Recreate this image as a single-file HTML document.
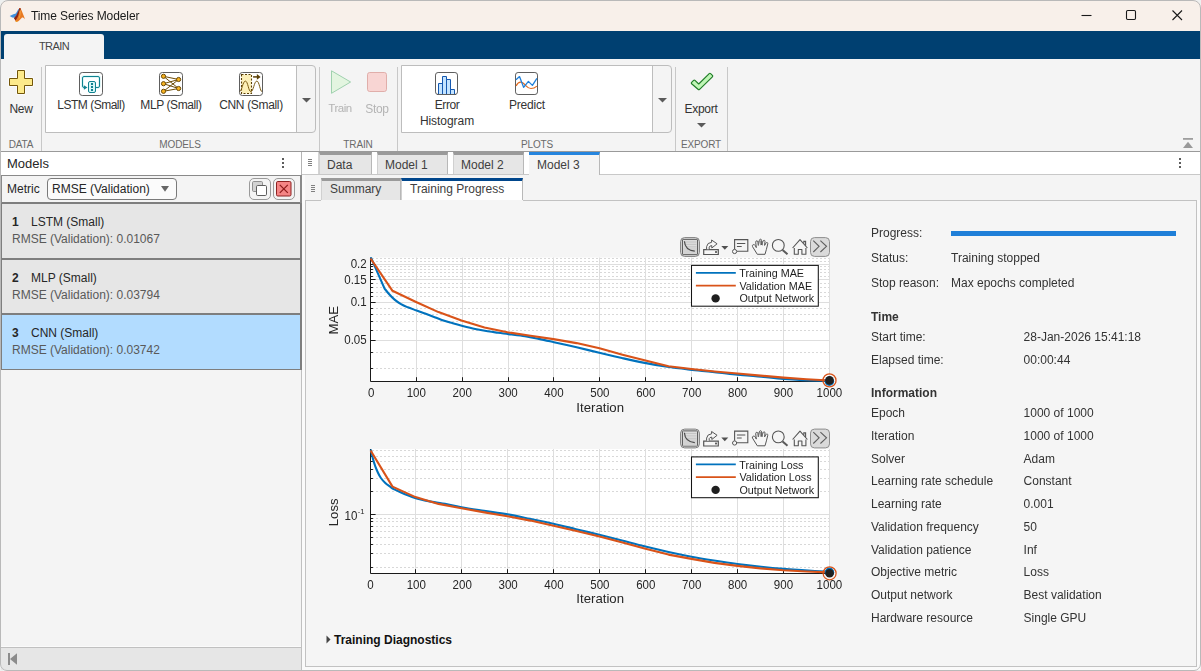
<!DOCTYPE html><html><head><meta charset="utf-8"><title>Time Series Modeler</title><style>
*{box-sizing:border-box;margin:0;padding:0}
html,body{width:1201px;height:671px;overflow:hidden;background:#eef0f0}
body{font-family:"Liberation Sans",sans-serif;font-size:12px;color:#262626;position:relative}
.a{position:absolute}
.t{position:absolute;white-space:nowrap;line-height:1}
.c{transform:translateX(-50%)}
.sep{position:absolute;width:1px;background:#c8c8c8;top:67px;height:84px}
.sec{position:absolute;top:140px;font-size:10px;letter-spacing:-0.15px;color:#6a6a6a;white-space:nowrap;line-height:1;transform:translateX(-50%)}
.lbl{position:absolute;font-size:12px;letter-spacing:-0.45px;color:#333;white-space:nowrap;line-height:1;transform:translateX(-50%)}
.dis{color:#b4b4b4}
.tr{font-size:11.5px}
.tab{position:absolute;top:152px;height:22px;background:#e6e6e6;border-top:3px solid #9a9a9a;border-right:1px solid #b8b8b8;border-left:1px solid #d0d0d0;font-size:12px;color:#404040;line-height:1}
.tab span{position:absolute;left:7px;top:4px;white-space:nowrap}
.g{will-change:transform}
.info{position:absolute;font-size:12px;color:#333;white-space:nowrap;line-height:1}
.b{font-weight:bold}
</style></head><body>
<div class="a" style="left:0;top:0;width:1201px;height:31px;background:#f8f0ea;border-radius:8px 8px 0 0"></div>
<div class="a" style="left:0;top:31px;width:1201px;height:28px;background:#004071"></div>
<div class="a" style="left:4px;top:34px;width:100px;height:25px;background:#f4f4f4;border-radius:3px 3px 0 0"></div>
<div class="t c" style="left:54px;top:41px;font-size:11px;letter-spacing:-0.6px;color:#444">TRAIN</div>
<div class="t g" style="left:31px;top:10px;font-size:12px;letter-spacing:-0.1px;color:#1a1a1a">Time Series Modeler</div>
<svg class="a" style="left:9px;top:7px" width="18" height="16" viewBox="9 7 18 16"><path d="M9.7 16L13.4 14.3 15.8 13.4 18.2 9.6 19.4 8.4 17.6 14.6 14.6 17.8 12.2 17.4Z" fill="#3f8fdc"/><path d="M13.9 18.2L16.4 15.2 18.2 11.2 19.5 8 20.5 8.2 19.8 14.5 17.8 19.6 16.2 21.4Z" fill="#8a2414"/><path d="M19.9 8C21 8.6 22.6 12.6 24.3 17.2L24.9 19.3C23.6 17.8 22.6 17.2 21.6 17.9 20.4 18.8 18.8 21.6 16.3 22 15.4 21.6 15.2 20.8 15.6 20.2 18 18 19.2 13 19.9 8Z" fill="#e87a22"/><path d="M19.9 8.4C20.6 11 20.4 15 19 18.4" stroke="#f4a040" stroke-width="0.9" fill="none"/><path d="M15.8 20.6L17.4 21.6 16.3 22z" fill="#f0b21c"/><path d="M19.3 8.6L19.9 7.9 20.7 8.7 20.4 10.2 19.2 10.4z" fill="#8a1a10"/></svg>
<svg class="a" style="left:1075px;top:5px" width="120" height="22" viewBox="0 0 120 22" fill="none" stroke="#1a1a1a" stroke-width="1.1"><path d="M6.5 10.5h10"/><rect x="51.5" y="5.5" width="9" height="9" rx="1.2"/><path d="M97.5 5.5l9.5 9.5M107 5.5l-9.5 9.5"/></svg>
<div class="a" style="left:0;top:59px;width:1201px;height:92px;background:#f4f4f4"></div>
<div class="sep" style="left:41px"></div>
<div class="sep" style="left:319px"></div>
<div class="sep" style="left:397px"></div>
<div class="sep" style="left:675px"></div>
<div class="sep" style="left:727px"></div>
<div class="a" style="left:45px;top:65px;width:271px;height:68px;border:1px solid #bdbdbd;border-radius:0 4px 4px 0;background:#f4f4f4"></div>
<div class="a" style="left:46px;top:66px;width:251px;height:66px;background:#fff;border-right:1px solid #bdbdbd"></div>
<svg class="a" style="left:302px;top:98px" width="9" height="5" viewBox="0 0 9 5"><path d="M0 0h9L4.5 4.5z" fill="#5a5a5a"/></svg>
<div class="a" style="left:401px;top:65px;width:271px;height:68px;border:1px solid #bdbdbd;border-radius:0 4px 4px 0;background:#f4f4f4"></div>
<div class="a" style="left:402px;top:66px;width:251px;height:66px;background:#fff;border-right:1px solid #bdbdbd"></div>
<svg class="a" style="left:658px;top:98px" width="9" height="5" viewBox="0 0 9 5"><path d="M0 0h9L4.5 4.5z" fill="#5a5a5a"/></svg>
<div class="sec" style="left:21px">DATA</div>
<div class="sec" style="left:180px">MODELS</div>
<div class="sec" style="left:358px">TRAIN</div>
<div class="sec" style="left:537px">PLOTS</div>
<div class="sec" style="left:701px">EXPORT</div>
<div class="lbl" style="left:21px;top:103px;letter-spacing:-0.3px">New</div>
<div class="lbl" style="left:91px;top:99px;letter-spacing:-0.5px">LSTM (Small)</div>
<div class="lbl" style="left:171px;top:99px;letter-spacing:-0.4px">MLP (Small)</div>
<div class="lbl" style="left:251px;top:99px;letter-spacing:-0.33px">CNN (Small)</div>
<div class="lbl dis g tr" style="left:340px;top:103px;letter-spacing:-0.45px">Train</div>
<div class="lbl dis g" style="left:377px;top:103px;letter-spacing:-0.35px">Stop</div>
<div class="lbl" style="left:447px;top:99px;letter-spacing:-0.45px">Error</div>
<div class="lbl" style="left:447px;top:115px;letter-spacing:-0.05px">Histogram</div>
<div class="lbl" style="left:527px;top:99px;letter-spacing:-0.2px">Predict</div>
<div class="lbl" style="left:701px;top:103px;letter-spacing:-0.3px">Export</div>

<svg class="a" style="left:8px;top:69px" width="26" height="26" viewBox="0 0 26 26"><path d="M9.5 1.5H16.5V9.5H24.5V16.5H16.5V24.5H9.5V16.5H1.5V9.5H9.5Z" fill="none" stroke="#fff" stroke-width="2.6" stroke-linejoin="round" opacity="0.8"/><path d="M9.5 1.5H16.5V9.5H24.5V16.5H16.5V24.5H9.5V16.5H1.5V9.5H9.5Z" fill="#fdea8a" stroke="#73560a" stroke-width="1" stroke-linejoin="round"/></svg>
<svg class="a" style="left:78px;top:71px" width="26" height="26" viewBox="0 0 26 26" fill="none"><rect x="1.5" y="1.5" width="23" height="23" rx="2.8" fill="#fff" stroke="#5e5e5e"/><path d="M18 16.5H20Q21.5 16.5 21.5 15V7Q21.5 5.5 20 5.5H6Q4.5 5.5 4.5 7V15Q4.5 16.5 6 16.5" stroke="#d8f6f6" stroke-width="2.6"/><path d="M18 16.5H20Q21.5 16.5 21.5 15V7Q21.5 5.5 20 5.5H6Q4.5 5.5 4.5 7V15Q4.5 16.5 6 16.5" stroke="#0f8290" stroke-width="1"/><rect x="10.5" y="10.5" width="7" height="11" rx="1.5" fill="#d6f7f7" stroke="#0f8290" stroke-width="1"/><g fill="#0f8290"><rect x="13" y="12" width="2" height="2"/><rect x="13" y="15" width="2" height="2"/><rect x="13" y="18" width="2" height="2"/><path d="M5.9 14.3L9.5 16.5 5.9 18.7z"/></g></svg>
<svg class="a" style="left:158px;top:71px" width="26" height="26" viewBox="0 0 26 26" fill="none"><rect x="1.5" y="1.5" width="23" height="23" rx="2.8" fill="#fff" stroke="#5e5e5e"/><g stroke="#6b4a06" stroke-width="1"><path d="M5.5 5.3L20.6 8.5M5.5 5.3L20.6 17.5M5.5 12.7L20.6 8.5M5.5 12.7L20.6 17.5M5.5 20.3L20.6 8.5M5.5 20.3L20.6 17.5"/></g><g fill="#f6b220" stroke="#6b4a06" stroke-width="1"><circle cx="5.5" cy="5.3" r="2.1"/><circle cx="5.5" cy="12.7" r="2.1"/><circle cx="5.5" cy="20.3" r="2.1"/><circle cx="20.6" cy="8.5" r="2.1"/><circle cx="20.6" cy="17.5" r="2.1"/></g></svg>
<svg class="a" style="left:238px;top:71px" width="26" height="26" viewBox="0 0 26 26" fill="none"><rect x="1.5" y="1.5" width="23" height="23" rx="2.8" fill="#fff" stroke="#5e5e5e"/><rect x="3.5" y="3.5" width="10" height="19" fill="#fdf0b8" stroke="#5a3f06" stroke-width="1.1" stroke-dasharray="2 1.5"/><path d="M1.8 20.4C3.8 20.4 4.8 10.1 7.4 10.1S10.4 20.6 12.9 20.6 16.2 10.1 18.8 10.1 22 20.6 24 20.6" stroke="#7b5a10" stroke-width="1"/><path d="M15.1 5.9h4.6" stroke="#5a3f06" stroke-width="1.5"/><path d="M18.9 3.1L22.6 5.9 18.9 8.7z" fill="#5a3f06"/></svg>
<svg class="a" style="left:330px;top:69px" width="24" height="26" viewBox="0 0 24 26"><path d="M1.5 1.8L20.6 13 1.5 24.3z" fill="#e3f5e0" stroke="#9fd1ae" stroke-width="1" stroke-linejoin="round"/></svg>
<svg class="a" style="left:366px;top:71px" width="22" height="22" viewBox="0 0 22 22"><rect x="1.5" y="1.5" width="19" height="19" rx="2.2" fill="#f8d5d3" stroke="#e0aeaa"/></svg>
<svg class="a" style="left:434px;top:71px" width="26" height="26" viewBox="0 0 26 26" fill="none"><rect x="1.5" y="1.5" width="22" height="22" rx="2.6" fill="#fff" stroke="#5e5e5e" stroke-width="1"/><g fill="#c4e4ff" stroke="#1558b0" stroke-width="1"><path d="M4.5 23V12.5h4V23"/><path d="M8.5 23V5.5h4V23"/><path d="M12.5 23V8.5h4V23"/><path d="M16.5 23V18.5h4V23"/></g><path d="M3 23.5h19" stroke="#5e5e5e" stroke-width="1"/></svg>
<svg class="a" style="left:514px;top:71px" width="26" height="26" viewBox="0 0 26 26" fill="none"><rect x="1.5" y="1.5" width="22" height="22" rx="2.6" fill="#fff" stroke="#5e5e5e" stroke-width="1"/><path d="M2.1 14.9C3.4 12.4 4.8 11.2 6.6 11.2 9.4 11.2 10.4 13.2 12 14.8 13.8 16.6 15 17.5 17 17.5 19 17.5 21.4 16.4 22.9 15.1" stroke="#e2691c" stroke-width="1.2"/><path d="M2 8.7L5.5 5.6 9.6 16.3 14.4 10.4 18.4 14.4 22.9 7.3" stroke="#2080da" stroke-width="1.3" stroke-linejoin="round"/></svg>
<svg class="a" style="left:689px;top:71px" width="26" height="20" viewBox="0 0 26 20"><path d="M2.6 11.4L4.6 9.4Q5.3 8.7 6 9.4L9.7 13 20.2 2.6Q20.9 1.9 21.6 2.6L23.4 4.4Q24.1 5.1 23.4 5.8L10.6 18.3Q9.8 19 9 18.3L2.6 12.8Q1.9 12.1 2.6 11.4z" fill="#c0f6b6" stroke="#1f7d27" stroke-width="1.15" stroke-linejoin="round"/></svg>
<svg class="a" style="left:697px;top:123px" width="9" height="5" viewBox="0 0 9 5"><path d="M0 0h9L4.5 4.5z" fill="#5a5a5a"/></svg>
<svg class="a" style="left:1183px;top:138px" width="10" height="10" viewBox="0 0 10 10"><path d="M0 0.9h10" stroke="#999" stroke-width="1.7"/><path d="M5 3.8L10 10H0z" fill="#999"/></svg>

<div class="a" style="left:0;top:151px;width:1201px;height:1px;background:#9a9a9a"></div>

<!-- left panel -->
<div class="a" style="left:0;top:152px;width:1201px;height:519px;background:#f4f4f4;border-radius:0 0 7px 7px"></div>
<div class="a" style="left:1px;top:152px;width:300px;height:23px;background:#fff"></div>
<div class="t" style="left:7px;top:157px;font-size:13px;color:#262626">Models</div>
<svg class="a" style="left:282px;top:158px" width="2" height="11" viewBox="0 0 2 11" fill="#5c5c5c"><rect x="0" y="0" width="2" height="2"/><rect x="0" y="4" width="2" height="2"/><rect x="0" y="8" width="2" height="2"/></svg>
<div class="a" style="left:1px;top:175px;width:301px;height:28px;background:#f4f4f4;border-top:1px solid #8a8a8a"></div>
<div class="t" style="left:7px;top:183px;font-size:12px;color:#262626">Metric</div>
<div class="a" style="left:47px;top:178px;width:130px;height:22px;background:#fbfbfb;border:1px solid #7a7a7a;border-radius:4px"></div>
<div class="t" style="left:52px;top:183px;font-size:12px;color:#262626">RMSE (Validation)</div>
<svg class="a" style="left:161px;top:186px" width="8" height="6" viewBox="0 0 8 6"><path d="M0 0h8L4 5.8z" fill="#666"/></svg>
<!-- copy / delete buttons -->
<div class="a" style="left:249px;top:178px;width:22px;height:22px;background:#f4f4f4;border:1px solid #9a9a9a;border-radius:5px"></div>
<svg class="a" style="left:251px;top:180px" width="18" height="18" viewBox="0 0 18 18"><rect x="1.5" y="1.5" width="10" height="10" rx="1.2" fill="#d2d2d2" stroke="#909090"/><rect x="5.5" y="5.5" width="10" height="10" rx="1.2" fill="#fff" stroke="#5e5e5e"/></svg>
<div class="a" style="left:273px;top:178px;width:22px;height:22px;background:#f4f4f4;border:1px solid #9a9a9a;border-radius:5px"></div>
<svg class="a" style="left:275px;top:180px" width="18" height="18" viewBox="0 0 18 18"><rect x="1.5" y="1.5" width="14.5" height="14.5" rx="1.3" fill="#f58585" stroke="#8d2222"/><path d="M4.8 4.8l8 8M12.8 4.8l-8 8" stroke="#8d1a1a" stroke-width="1.2"/></svg>
<!-- list -->
<div class="a" style="left:1px;top:202px;width:301px;height:168px;background:#7e7e7e"></div>
<div class="a" style="left:2px;top:204px;width:298px;height:54px;background:#e6e6e6"></div>
<div class="a" style="left:2px;top:260px;width:298px;height:53px;background:#e6e6e6"></div>
<div class="a" style="left:2px;top:315px;width:298px;height:54px;background:#b2dcff"></div>
<div class="a" style="left:1px;top:175px;width:1px;height:28px;background:#8a8a8a"></div>
<div class="a" style="left:300px;top:175px;width:2px;height:28px;background:#8a8a8a"></div>
<div class="t b" style="left:12px;top:216px">1</div><div class="t" style="left:31px;top:216px">LSTM (Small)</div><div class="t" style="left:12px;top:233px;color:#595959">RMSE (Validation): 0.01067</div>
<div class="t b" style="left:12px;top:272px">2</div><div class="t" style="left:31px;top:272px">MLP (Small)</div><div class="t" style="left:12px;top:289px;color:#595959">RMSE (Validation): 0.03794</div>
<div class="t b" style="left:12px;top:327px">3</div><div class="t" style="left:31px;top:327px">CNN (Small)</div><div class="t" style="left:12px;top:344px;color:#595959">RMSE (Validation): 0.03742</div>
<!-- left status bar -->
<div class="a" style="left:1px;top:647px;width:300px;height:23px;background:#e6e6e6;border-top:1px solid #c0c0c0"></div>
<svg class="a" style="left:8px;top:653px" width="10" height="12" viewBox="0 0 10 12"><rect x="0" y="0" width="2" height="12" fill="#8c8c8c"/><path d="M9 0.2v11.6L2 6z" fill="#8c8c8c"/></svg>
<!-- divider -->
<div class="a" style="left:301px;top:152px;width:1px;height:23px;background:#b4b4b4"></div>
<div class="a" style="left:301px;top:370px;width:1px;height:300px;background:#c0c0c0"></div>
<div class="a" style="left:302px;top:175px;width:3px;height:495px;background:#fafafa"></div>
<div class="a" style="left:1px;top:646px;width:300px;height:1px;background:#fafafa"></div>
<!-- right tabstrip -->
<div class="a" style="left:302px;top:152px;width:899px;height:22px;background:#fff"></div>
<div class="a" style="left:302px;top:174px;width:899px;height:1px;background:#c8c8c8"></div>
<div class="a" style="left:318px;top:152px;width:1px;height:22px;background:#d4d4d4"></div>
<svg class="a" style="left:308px;top:159px" width="4" height="8" viewBox="0 0 4 8"><path d="M0 0.5h4M0 2.5h4M0 4.5h4M0 6.5h4" stroke="#808080" stroke-width="1"/></svg>
<div class="tab" style="left:319px;width:53px"><span>Data</span></div>
<div class="tab" style="left:377px;width:71px"><span>Model 1</span></div>
<div class="tab" style="left:453px;width:71px"><span>Model 2</span></div>
<div class="tab" style="left:529px;width:71px;background:#f4f4f4;border-top:3px solid #2585de;border-left:none;height:23px"><span style="left:8px">Model 3</span></div>
<svg class="a" style="left:1179px;top:158px" width="2" height="11" viewBox="0 0 2 11" fill="#5c5c5c"><rect x="0" y="0" width="2" height="2"/><rect x="0" y="4" width="2" height="2"/><rect x="0" y="8" width="2" height="2"/></svg>
<!-- model 3 document area -->
<svg class="a" style="left:311px;top:185px" width="4" height="8" viewBox="0 0 4 8"><path d="M0 0.5h4M0 2.5h4M0 4.5h4M0 6.5h4" stroke="#808080" stroke-width="1"/></svg>
<div class="tab" style="left:321px;top:178px;width:80px;height:23px;border-bottom:1px solid #b8b8b8"><span style="top:2px;left:8px">Summary</span></div>
<div class="tab" style="left:401px;top:178px;width:122px;height:23px;background:#fff;border-top:3px solid #00468c"><span style="top:2px;left:8px">Training Progress</span></div>
<!-- content border -->
<div class="a" style="left:1197px;top:200px;width:3px;height:470px;background:#fafafa"></div>
<div class="a" style="left:302px;top:667px;width:898px;height:3px;background:#fafafa"></div>
<div class="a" style="left:305px;top:200px;width:892px;height:467px;border:1px solid #c2c2c2;border-top:none;background:#f5f5f5"></div>
<div class="a" style="left:523px;top:200px;width:674px;height:1px;background:#c2c2c2"></div>
<div class="a" style="left:305px;top:200px;width:16px;height:1px;background:#c2c2c2"></div>
<svg class="a" style="left:326px;top:635px" width="5" height="9" viewBox="0 0 5 9"><path d="M0.5 0.5L4.5 4.5 0.5 8.5z" fill="#444"/></svg>
<div class="t b" style="left:334px;top:634px;font-size:12px;color:#111">Training Diagnostics</div>

<svg class="a g" style="left:0;top:0" width="1201" height="671" viewBox="0 0 1201 671" font-family="Liberation Sans, sans-serif"><rect x="370" y="257.5" width="460" height="124.0" fill="#fff"/>
<path d="M372.0 258.50H830.0" stroke="#d8d8d8" stroke-width="1" stroke-dasharray="2 2" fill="none"/>
<path d="M372.0 261.50H830.0" stroke="#d8d8d8" stroke-width="1" stroke-dasharray="2 2" fill="none"/>
<path d="M372.0 266.50H830.0" stroke="#d8d8d8" stroke-width="1" stroke-dasharray="2 2" fill="none"/>
<path d="M372.0 269.50H830.0" stroke="#d8d8d8" stroke-width="1" stroke-dasharray="2 2" fill="none"/>
<path d="M372.0 272.50H830.0" stroke="#d8d8d8" stroke-width="1" stroke-dasharray="2 2" fill="none"/>
<path d="M372.0 276.50H830.0" stroke="#d8d8d8" stroke-width="1" stroke-dasharray="2 2" fill="none"/>
<path d="M372.0 283.50H830.0" stroke="#d8d8d8" stroke-width="1" stroke-dasharray="2 2" fill="none"/>
<path d="M372.0 287.50H830.0" stroke="#d8d8d8" stroke-width="1" stroke-dasharray="2 2" fill="none"/>
<path d="M372.0 292.50H830.0" stroke="#d8d8d8" stroke-width="1" stroke-dasharray="2 2" fill="none"/>
<path d="M372.0 296.50H830.0" stroke="#d8d8d8" stroke-width="1" stroke-dasharray="2 2" fill="none"/>
<path d="M372.0 308.50H830.0" stroke="#d8d8d8" stroke-width="1" stroke-dasharray="2 2" fill="none"/>
<path d="M372.0 314.50H830.0" stroke="#d8d8d8" stroke-width="1" stroke-dasharray="2 2" fill="none"/>
<path d="M372.0 321.50H830.0" stroke="#d8d8d8" stroke-width="1" stroke-dasharray="2 2" fill="none"/>
<path d="M372.0 330.50H830.0" stroke="#d8d8d8" stroke-width="1" stroke-dasharray="2 2" fill="none"/>
<path d="M372.0 352.50H830.0" stroke="#d8d8d8" stroke-width="1" stroke-dasharray="2 2" fill="none"/>
<path d="M372.0 368.50H830.0" stroke="#d8d8d8" stroke-width="1" stroke-dasharray="2 2" fill="none"/>
<path d="M371 264.50H830" stroke="#dedede" stroke-width="1" fill="none"/>
<path d="M371 279.50H830" stroke="#dedede" stroke-width="1" fill="none"/>
<path d="M371 302.50H830" stroke="#dedede" stroke-width="1" fill="none"/>
<path d="M371 340.50H830" stroke="#dedede" stroke-width="1" fill="none"/>
<path d="M416.50 257.5V381.5" stroke="#dedede" stroke-width="1" fill="none"/>
<path d="M462.50 257.5V381.5" stroke="#dedede" stroke-width="1" fill="none"/>
<path d="M508.50 257.5V381.5" stroke="#dedede" stroke-width="1" fill="none"/>
<path d="M553.50 257.5V381.5" stroke="#dedede" stroke-width="1" fill="none"/>
<path d="M599.50 257.5V381.5" stroke="#dedede" stroke-width="1" fill="none"/>
<path d="M645.50 257.5V381.5" stroke="#dedede" stroke-width="1" fill="none"/>
<path d="M691.50 257.5V381.5" stroke="#dedede" stroke-width="1" fill="none"/>
<path d="M737.50 257.5V381.5" stroke="#dedede" stroke-width="1" fill="none"/>
<path d="M783.50 257.5V381.5" stroke="#dedede" stroke-width="1" fill="none"/>
<path d="M829.50 257.5V381.5" stroke="#dedede" stroke-width="1" fill="none"/>
<path d="M370.5 257.5V381.50H830" stroke="#1a1a1a" stroke-width="1" fill="none"/>
<path d="M416.50 381.5v-4.3" stroke="#1a1a1a" stroke-width="1"/>
<path d="M462.50 381.5v-4.3" stroke="#1a1a1a" stroke-width="1"/>
<path d="M508.50 381.5v-4.3" stroke="#1a1a1a" stroke-width="1"/>
<path d="M553.50 381.5v-4.3" stroke="#1a1a1a" stroke-width="1"/>
<path d="M599.50 381.5v-4.3" stroke="#1a1a1a" stroke-width="1"/>
<path d="M645.50 381.5v-4.3" stroke="#1a1a1a" stroke-width="1"/>
<path d="M691.50 381.5v-4.3" stroke="#1a1a1a" stroke-width="1"/>
<path d="M737.50 381.5v-4.3" stroke="#1a1a1a" stroke-width="1"/>
<path d="M783.50 381.5v-4.3" stroke="#1a1a1a" stroke-width="1"/>
<path d="M371 264.50h4.6" stroke="#1a1a1a" stroke-width="1"/>
<path d="M371 279.50h4.6" stroke="#1a1a1a" stroke-width="1"/>
<path d="M371 302.50h4.6" stroke="#1a1a1a" stroke-width="1"/>
<path d="M371 340.50h4.6" stroke="#1a1a1a" stroke-width="1"/>
<path d="M371 266.50h1.9" stroke="#1a1a1a" stroke-width="1"/>
<path d="M371 269.50h1.9" stroke="#1a1a1a" stroke-width="1"/>
<path d="M371 272.50h1.9" stroke="#1a1a1a" stroke-width="1"/>
<path d="M371 276.50h1.9" stroke="#1a1a1a" stroke-width="1"/>
<path d="M371 283.50h1.9" stroke="#1a1a1a" stroke-width="1"/>
<path d="M371 287.50h1.9" stroke="#1a1a1a" stroke-width="1"/>
<path d="M371 292.50h1.9" stroke="#1a1a1a" stroke-width="1"/>
<path d="M371 296.50h1.9" stroke="#1a1a1a" stroke-width="1"/>
<path d="M371 308.50h1.9" stroke="#1a1a1a" stroke-width="1"/>
<path d="M371 314.50h1.9" stroke="#1a1a1a" stroke-width="1"/>
<path d="M371 321.50h1.9" stroke="#1a1a1a" stroke-width="1"/>
<path d="M371 330.50h1.9" stroke="#1a1a1a" stroke-width="1"/>
<path d="M371 352.50h1.9" stroke="#1a1a1a" stroke-width="1"/>
<path d="M371 368.50h1.9" stroke="#1a1a1a" stroke-width="1"/>
<path d="M370.90 257.40L384.60 288.60C385.37 289.55 387.58 292.50 389.20 294.30C390.82 296.10 392.33 297.75 394.30 299.40C396.27 301.05 398.77 302.88 401.00 304.20C403.23 305.52 405.10 306.25 407.70 307.30C410.30 308.35 413.70 309.45 416.60 310.50C419.50 311.55 422.30 312.57 425.10 313.60C427.90 314.63 430.62 315.65 433.40 316.70C436.18 317.75 438.67 318.85 441.80 319.90C444.93 320.95 448.73 322.00 452.20 323.00C455.67 324.00 458.77 324.90 462.60 325.90C466.43 326.90 471.02 328.10 475.20 329.00C479.38 329.90 483.88 330.67 487.70 331.30C491.52 331.93 494.63 332.33 498.10 332.80C501.57 333.27 504.02 333.53 508.50 334.10C512.98 334.67 519.92 335.40 525.00 336.20C530.08 337.00 534.17 337.90 539.00 338.90C543.83 339.90 547.73 340.80 554.00 342.20C560.27 343.60 569.05 345.55 576.60 347.30C584.15 349.05 591.75 350.92 599.30 352.70C606.85 354.48 614.35 356.30 621.90 358.00C629.45 359.70 637.05 361.43 644.60 362.90C652.15 364.37 659.65 365.68 667.20 366.80C674.75 367.92 682.35 368.75 689.90 369.60C697.45 370.45 704.95 371.08 712.50 371.90C720.05 372.72 727.65 373.75 735.20 374.50C742.75 375.25 749.78 375.65 757.80 376.40C765.82 377.15 775.75 378.38 783.30 379.00C790.85 379.62 795.40 379.82 803.10 380.10C810.80 380.38 825.10 380.60 829.50 380.70" stroke="#0072bd" stroke-width="2.1" fill="none" stroke-linejoin="round"/>
<path d="M370.60 258.50L392.50 290.80L415.50 301.70L438.50 312.10L461.50 320.40L484.50 327.50L507.50 332.30L530.50 335.70L553.50 339.10L576.50 343.10L599.50 348.30L622.50 354.70L645.50 360.60L668.50 366.20L691.50 369.00L714.50 371.50L737.50 373.50L760.50 375.60L783.50 377.60L806.50 379.20L829.50 380.50" stroke="#d95319" stroke-width="2.1" fill="none" stroke-linejoin="round"/>
<circle cx="829.4" cy="381.3" r="4.7" fill="#0072bd"/>
<circle cx="829.5" cy="380.4" r="4.3" fill="#1f1f1f"/><circle cx="829.5" cy="380.4" r="6.5" fill="none" stroke="#d95319" stroke-width="1.25"/>
<g font-size="12.5" fill="#262626" text-anchor="middle">
<text transform="translate(371.2 396.8) scale(0.925 1)">0</text>
<text transform="translate(416.3 396.8) scale(0.925 1)">100</text>
<text transform="translate(462.2 396.8) scale(0.925 1)">200</text>
<text transform="translate(508.1 396.8) scale(0.925 1)">300</text>
<text transform="translate(554.0 396.8) scale(0.925 1)">400</text>
<text transform="translate(599.9 396.8) scale(0.925 1)">500</text>
<text transform="translate(645.8 396.8) scale(0.925 1)">600</text>
<text transform="translate(691.7 396.8) scale(0.925 1)">700</text>
<text transform="translate(737.6 396.8) scale(0.925 1)">800</text>
<text transform="translate(783.5 396.8) scale(0.925 1)">900</text>
<text transform="translate(829.4 396.8) scale(0.925 1)">1000</text>
</g>
<text x="600.2" y="411.9" font-size="13.2" fill="#262626" text-anchor="middle">Iteration</text>
<text transform="translate(338.3 320.2) rotate(-90)" font-size="13.2" fill="#262626" text-anchor="middle">MAE</text>
<g font-size="12.5" fill="#262626" text-anchor="end"><text transform="translate(366.7 268.0) scale(0.925 1)">0.2</text><text transform="translate(366.7 283.6) scale(0.925 1)">0.15</text><text transform="translate(366.7 305.7) scale(0.925 1)">0.1</text><text transform="translate(366.7 343.9) scale(0.925 1)">0.05</text></g>
<rect x="691.5" y="265.4" width="126.8" height="40.8" fill="#fff" stroke="#151515" stroke-width="1.05"/>
<path d="M695.9 272.9h39.9" stroke="#0072bd" stroke-width="1.6"/><path d="M695.9 285.6h39.9" stroke="#d95319" stroke-width="1.6"/><circle cx="715.6" cy="298.4" r="4.2" fill="#1f1f1f"/>
<g font-size="10.75" fill="#1e1e1e"><text x="739.3" y="277.0">Training MAE</text><text x="739.4" y="289.5">Validation MAE</text><text x="739.4" y="302.0">Output Network</text></g>
<g transform="translate(0,0)" fill="none" stroke="#555" stroke-width="1.1">
<rect x="680.6" y="237.6" width="18.8" height="18.8" rx="4" fill="#d9d9d9" stroke="#808080" stroke-width="1"/><rect x="682.5" y="239.4" width="15" height="15.2" rx="0.6" fill="#dcdcdc" stroke="#606060" stroke-width="1"/>
<path d="M684.5 242h12M684.5 244.4h12M684.5 246.8h12" stroke="#c4c4c4" stroke-width="1"/><path d="M683.2 247.6h13.6v6.3h-13.6z" fill="#d2d2d2" stroke="none"/>
<path d="M684.4 241.3C684.8 247.4 688.6 250.6 694.8 251.1" stroke="#4a4a4a" stroke-width="1.2"/>
<path d="M703.7 249.6h14.6v4.9h-14.6z" fill="#f6f6f6" stroke-width="1.2"/><rect x="715.1" y="251.1" width="1.8" height="1.8" fill="#505050" stroke="none"/>
<path d="M706.6 249.2v-2.6q0.6-4 5-4.3v-2.3l5.5 3.8-5.3 4.2v-2.4q-2.2 0.2-2.6 1.5v2.1" fill="#f6f6f6" stroke-linejoin="round" stroke-width="1"/>
<path d="M721.3 246h7l-3.5 3.8z" fill="#505050" stroke="none"/>
<path d="M734.6 249.3V239.6H747.8V251.2H736.9" stroke-width="1.1"/><path d="M736.9 243.5h8.4M736.9 246.5h4.8" stroke-width="1"/><circle cx="734.6" cy="251.5" r="2.1" fill="#f6f6f6" stroke-width="1"/>
<path d="M757.3 254.3L752.5 246.6Q751.8 245.2 753.2 244.7T755.3 245.6L756.3 247.6L755.7 242.2Q755.7 240.8 756.8 240.8T757.9 242.2L758.3 245.3L759.4 240.3Q759.6 239.2 760.5 239.2T761.6 240.3L761.6 245L763.1 241.2Q763.4 240.2 764.2 240.3T765 241.5L764.6 245.4L765.9 243.1Q766.4 242.2 767.2 242.5T767.8 243.7L766.4 249.4L765 254.3Z" fill="#f6f6f6" stroke-linejoin="round" stroke-width="1"/>
<path d="M758.6 241v4.4M760.6 240.4v4.8M762.5 241v4.4" stroke="#777" stroke-width="0.8"/>
<circle cx="778.3" cy="245.4" r="5.9" stroke-width="1.1"/><path d="M782.6 249.9l4.9 4.4" stroke-width="2" stroke="#5a5a5a"/>
<path d="M792.6 248l7.4-8.4 7.4 8.4" stroke-linejoin="round"/><path d="M794.3 248v6.2h4v-4.7h3.6v4.7h4v-6.2" stroke-linejoin="round"/><path d="M803.8 243.6v-2.2h1.8v4.3"/>
<rect x="810.5" y="237.6" width="19" height="18.8" rx="4" fill="#dadada" stroke="#8e8e8e" stroke-width="1"/>
<path d="M813.3 240.6l5.8 5.7-5.8 5.7M820.4 240.6l6.1 5.7-6.1 5.7" stroke="#5e5e5e" stroke-width="1.1"/>
</g><rect x="370" y="449.0" width="460" height="124.5" fill="#fff"/>
<path d="M372.0 450.50H830.0" stroke="#d8d8d8" stroke-width="1" stroke-dasharray="2 2" fill="none"/>
<path d="M372.0 456.50H830.0" stroke="#d8d8d8" stroke-width="1" stroke-dasharray="2 2" fill="none"/>
<path d="M372.0 461.50H830.0" stroke="#d8d8d8" stroke-width="1" stroke-dasharray="2 2" fill="none"/>
<path d="M372.0 469.50H830.0" stroke="#d8d8d8" stroke-width="1" stroke-dasharray="2 2" fill="none"/>
<path d="M372.0 478.50H830.0" stroke="#d8d8d8" stroke-width="1" stroke-dasharray="2 2" fill="none"/>
<path d="M372.0 491.50H830.0" stroke="#d8d8d8" stroke-width="1" stroke-dasharray="2 2" fill="none"/>
<path d="M372.0 518.50H830.0" stroke="#d8d8d8" stroke-width="1" stroke-dasharray="2 2" fill="none"/>
<path d="M372.0 521.50H830.0" stroke="#d8d8d8" stroke-width="1" stroke-dasharray="2 2" fill="none"/>
<path d="M372.0 526.50H830.0" stroke="#d8d8d8" stroke-width="1" stroke-dasharray="2 2" fill="none"/>
<path d="M372.0 531.50H830.0" stroke="#d8d8d8" stroke-width="1" stroke-dasharray="2 2" fill="none"/>
<path d="M372.0 537.50H830.0" stroke="#d8d8d8" stroke-width="1" stroke-dasharray="2 2" fill="none"/>
<path d="M372.0 544.50H830.0" stroke="#d8d8d8" stroke-width="1" stroke-dasharray="2 2" fill="none"/>
<path d="M372.0 553.50H830.0" stroke="#d8d8d8" stroke-width="1" stroke-dasharray="2 2" fill="none"/>
<path d="M372.0 567.50H830.0" stroke="#d8d8d8" stroke-width="1" stroke-dasharray="2 2" fill="none"/>
<path d="M371 514.50H830" stroke="#dedede" stroke-width="1" fill="none"/>
<path d="M415.50 449.0V573.5" stroke="#dedede" stroke-width="1" fill="none"/>
<path d="M461.50 449.0V573.5" stroke="#dedede" stroke-width="1" fill="none"/>
<path d="M507.50 449.0V573.5" stroke="#dedede" stroke-width="1" fill="none"/>
<path d="M553.50 449.0V573.5" stroke="#dedede" stroke-width="1" fill="none"/>
<path d="M599.50 449.0V573.5" stroke="#dedede" stroke-width="1" fill="none"/>
<path d="M645.50 449.0V573.5" stroke="#dedede" stroke-width="1" fill="none"/>
<path d="M691.50 449.0V573.5" stroke="#dedede" stroke-width="1" fill="none"/>
<path d="M737.50 449.0V573.5" stroke="#dedede" stroke-width="1" fill="none"/>
<path d="M783.50 449.0V573.5" stroke="#dedede" stroke-width="1" fill="none"/>
<path d="M829.50 449.0V573.5" stroke="#dedede" stroke-width="1" fill="none"/>
<path d="M370.5 449.0V573.50H830" stroke="#1a1a1a" stroke-width="1" fill="none"/>
<path d="M415.50 573.5v-4.3" stroke="#1a1a1a" stroke-width="1"/>
<path d="M461.50 573.5v-4.3" stroke="#1a1a1a" stroke-width="1"/>
<path d="M507.50 573.5v-4.3" stroke="#1a1a1a" stroke-width="1"/>
<path d="M553.50 573.5v-4.3" stroke="#1a1a1a" stroke-width="1"/>
<path d="M599.50 573.5v-4.3" stroke="#1a1a1a" stroke-width="1"/>
<path d="M645.50 573.5v-4.3" stroke="#1a1a1a" stroke-width="1"/>
<path d="M691.50 573.5v-4.3" stroke="#1a1a1a" stroke-width="1"/>
<path d="M737.50 573.5v-4.3" stroke="#1a1a1a" stroke-width="1"/>
<path d="M783.50 573.5v-4.3" stroke="#1a1a1a" stroke-width="1"/>
<path d="M371 514.50h4.6" stroke="#1a1a1a" stroke-width="1"/>
<path d="M371 456.50h1.9" stroke="#1a1a1a" stroke-width="1"/>
<path d="M371 461.50h1.9" stroke="#1a1a1a" stroke-width="1"/>
<path d="M371 469.50h1.9" stroke="#1a1a1a" stroke-width="1"/>
<path d="M371 478.50h1.9" stroke="#1a1a1a" stroke-width="1"/>
<path d="M371 491.50h1.9" stroke="#1a1a1a" stroke-width="1"/>
<path d="M371 518.50h1.9" stroke="#1a1a1a" stroke-width="1"/>
<path d="M371 521.50h1.9" stroke="#1a1a1a" stroke-width="1"/>
<path d="M371 526.50h1.9" stroke="#1a1a1a" stroke-width="1"/>
<path d="M371 531.50h1.9" stroke="#1a1a1a" stroke-width="1"/>
<path d="M371 537.50h1.9" stroke="#1a1a1a" stroke-width="1"/>
<path d="M371 544.50h1.9" stroke="#1a1a1a" stroke-width="1"/>
<path d="M371 553.50h1.9" stroke="#1a1a1a" stroke-width="1"/>
<path d="M371 567.50h1.9" stroke="#1a1a1a" stroke-width="1"/>
<path d="M370.80 449.50C371.17 451.08 372.25 456.20 373.00 459.00C373.75 461.80 374.45 463.97 375.30 466.30C376.15 468.63 377.17 471.05 378.10 473.00C379.03 474.95 379.70 476.33 380.90 478.00C382.10 479.67 383.82 481.60 385.30 483.00C386.78 484.40 388.30 485.33 389.80 486.40C391.30 487.47 392.43 488.38 394.30 489.40C396.17 490.42 398.77 491.52 401.00 492.50C403.23 493.48 405.10 494.32 407.70 495.30C410.30 496.28 413.62 497.52 416.60 498.40C419.58 499.28 422.25 499.90 425.60 500.60C428.95 501.30 433.47 502.05 436.70 502.60C439.93 503.15 440.87 503.13 445.00 503.90C449.13 504.67 455.00 506.05 461.50 507.20C468.00 508.35 476.33 509.60 484.00 510.80C491.67 512.00 499.83 513.05 507.50 514.40C515.17 515.75 522.35 517.33 530.00 518.90C537.65 520.47 545.73 522.08 553.40 523.80C561.07 525.52 568.35 527.37 576.00 529.20C583.65 531.03 591.63 532.90 599.30 534.80C606.97 536.70 614.32 538.63 622.00 540.60C629.68 542.57 637.65 544.70 645.40 546.60C653.15 548.50 660.83 550.32 668.50 552.00C676.17 553.68 683.83 555.28 691.40 556.70C698.97 558.12 706.23 559.28 713.90 560.50C721.57 561.72 729.53 562.95 737.40 564.00C745.27 565.05 753.42 565.98 761.10 566.80C768.78 567.62 776.20 568.32 783.50 568.90C790.80 569.48 797.23 569.80 804.90 570.30C812.57 570.80 825.40 571.63 829.50 571.90" stroke="#0072bd" stroke-width="2.1" fill="none" stroke-linejoin="round"/>
<path d="M370.60 450.50L392.50 486.60L415.50 497.10L438.50 503.90L461.50 508.30L484.50 512.40L507.50 516.20L530.50 520.60L553.50 525.80L576.50 531.00L599.50 536.60L622.50 542.60L645.50 548.70L668.50 554.60L691.50 558.90L714.50 562.90L737.50 565.90L760.50 568.40L783.50 570.30L806.50 571.50L829.50 572.40" stroke="#d95319" stroke-width="2.1" fill="none" stroke-linejoin="round"/>
<circle cx="829.5" cy="572.3" r="4.7" fill="#0072bd"/>
<circle cx="829.6" cy="573.3" r="4.3" fill="#1f1f1f"/><circle cx="829.6" cy="573.3" r="6.5" fill="none" stroke="#d95319" stroke-width="1.25"/>
<g font-size="12.5" fill="#262626" text-anchor="middle">
<text transform="translate(370.4 588.8) scale(0.925 1)">0</text>
<text transform="translate(416.3 588.8) scale(0.925 1)">100</text>
<text transform="translate(462.2 588.8) scale(0.925 1)">200</text>
<text transform="translate(508.1 588.8) scale(0.925 1)">300</text>
<text transform="translate(554.0 588.8) scale(0.925 1)">400</text>
<text transform="translate(599.9 588.8) scale(0.925 1)">500</text>
<text transform="translate(645.8 588.8) scale(0.925 1)">600</text>
<text transform="translate(691.7 588.8) scale(0.925 1)">700</text>
<text transform="translate(737.6 588.8) scale(0.925 1)">800</text>
<text transform="translate(783.5 588.8) scale(0.925 1)">900</text>
<text transform="translate(829.4 588.8) scale(0.925 1)">1000</text>
</g>
<text x="600.2" y="602.9" font-size="13.2" fill="#262626" text-anchor="middle">Iteration</text>
<text transform="translate(338.3 512.3) rotate(-90)" font-size="13.2" fill="#262626" text-anchor="middle">Loss</text>
<g fill="#262626"><text transform="translate(344.6 519.5) scale(0.925 1)" font-size="12.5">10</text><text x="357.8" y="513.8" font-size="7.6">-1</text></g>
<rect x="691.5" y="456.9" width="126.8" height="40.8" fill="#fff" stroke="#151515" stroke-width="1.05"/>
<path d="M695.9 464.4h39.9" stroke="#0072bd" stroke-width="1.6"/><path d="M695.9 477.1h39.9" stroke="#d95319" stroke-width="1.6"/><circle cx="715.6" cy="489.9" r="4.2" fill="#1f1f1f"/>
<g font-size="10.75" fill="#1e1e1e"><text x="739.3" y="468.5">Training Loss</text><text x="739.4" y="481.0">Validation Loss</text><text x="739.4" y="493.5">Output Network</text></g>
<g transform="translate(0,191.5)" fill="none" stroke="#555" stroke-width="1.1">
<rect x="680.6" y="237.6" width="18.8" height="18.8" rx="4" fill="#d9d9d9" stroke="#808080" stroke-width="1"/><rect x="682.5" y="239.4" width="15" height="15.2" rx="0.6" fill="#dcdcdc" stroke="#606060" stroke-width="1"/>
<path d="M684.5 242h12M684.5 244.4h12M684.5 246.8h12" stroke="#c4c4c4" stroke-width="1"/><path d="M683.2 247.6h13.6v6.3h-13.6z" fill="#d2d2d2" stroke="none"/>
<path d="M684.4 241.3C684.8 247.4 688.6 250.6 694.8 251.1" stroke="#4a4a4a" stroke-width="1.2"/>
<path d="M703.7 249.6h14.6v4.9h-14.6z" fill="#f6f6f6" stroke-width="1.2"/><rect x="715.1" y="251.1" width="1.8" height="1.8" fill="#505050" stroke="none"/>
<path d="M706.6 249.2v-2.6q0.6-4 5-4.3v-2.3l5.5 3.8-5.3 4.2v-2.4q-2.2 0.2-2.6 1.5v2.1" fill="#f6f6f6" stroke-linejoin="round" stroke-width="1"/>
<path d="M721.3 246h7l-3.5 3.8z" fill="#505050" stroke="none"/>
<path d="M734.6 249.3V239.6H747.8V251.2H736.9" stroke-width="1.1"/><path d="M736.9 243.5h8.4M736.9 246.5h4.8" stroke-width="1"/><circle cx="734.6" cy="251.5" r="2.1" fill="#f6f6f6" stroke-width="1"/>
<path d="M757.3 254.3L752.5 246.6Q751.8 245.2 753.2 244.7T755.3 245.6L756.3 247.6L755.7 242.2Q755.7 240.8 756.8 240.8T757.9 242.2L758.3 245.3L759.4 240.3Q759.6 239.2 760.5 239.2T761.6 240.3L761.6 245L763.1 241.2Q763.4 240.2 764.2 240.3T765 241.5L764.6 245.4L765.9 243.1Q766.4 242.2 767.2 242.5T767.8 243.7L766.4 249.4L765 254.3Z" fill="#f6f6f6" stroke-linejoin="round" stroke-width="1"/>
<path d="M758.6 241v4.4M760.6 240.4v4.8M762.5 241v4.4" stroke="#777" stroke-width="0.8"/>
<circle cx="778.3" cy="245.4" r="5.9" stroke-width="1.1"/><path d="M782.6 249.9l4.9 4.4" stroke-width="2" stroke="#5a5a5a"/>
<path d="M792.6 248l7.4-8.4 7.4 8.4" stroke-linejoin="round"/><path d="M794.3 248v6.2h4v-4.7h3.6v4.7h4v-6.2" stroke-linejoin="round"/><path d="M803.8 243.6v-2.2h1.8v4.3"/>
<rect x="810.5" y="237.6" width="19" height="18.8" rx="4" fill="#dadada" stroke="#8e8e8e" stroke-width="1"/>
<path d="M813.3 240.6l5.8 5.7-5.8 5.7M820.4 240.6l6.1 5.7-6.1 5.7" stroke="#5e5e5e" stroke-width="1.1"/>
</g></svg>
<div class="a g" style="left:0;top:0;width:1201px;height:671px"><div class="info" style="left:871px;top:227px">Progress:</div>
<div class="info" style="left:871px;top:252px">Status:</div>
<div class="info" style="left:951px;top:252px">Training stopped</div>
<div class="info" style="left:871px;top:277px">Stop reason:</div>
<div class="info" style="left:951px;top:277px">Max epochs completed</div>
<div class="info b" style="left:871px;top:311px">Time</div>
<div class="info" style="left:871px;top:331px">Start time:</div>
<div class="info" style="left:1023.6px;top:331px">28-Jan-2026 15:41:18</div>
<div class="info" style="left:871px;top:354px">Elapsed time:</div>
<div class="info" style="left:1023.6px;top:354px">00:00:44</div>
<div class="info b" style="left:871px;top:387px">Information</div>
<div class="info" style="left:871px;top:407px">Epoch</div>
<div class="info" style="left:1023.6px;top:407px">1000 of 1000</div>
<div class="info" style="left:871px;top:430px">Iteration</div>
<div class="info" style="left:1023.6px;top:430px">1000 of 1000</div>
<div class="info" style="left:871px;top:453px">Solver</div>
<div class="info" style="left:1023.6px;top:453px">Adam</div>
<div class="info" style="left:871px;top:475px">Learning rate schedule</div>
<div class="info" style="left:1023.6px;top:475px">Constant</div>
<div class="info" style="left:871px;top:498px">Learning rate</div>
<div class="info" style="left:1023.6px;top:498px">0.001</div>
<div class="info" style="left:871px;top:521px">Validation frequency</div>
<div class="info" style="left:1023.6px;top:521px">50</div>
<div class="info" style="left:871px;top:544px">Validation patience</div>
<div class="info" style="left:1023.6px;top:544px">Inf</div>
<div class="info" style="left:871px;top:566px">Objective metric</div>
<div class="info" style="left:1023.6px;top:566px">Loss</div>
<div class="info" style="left:871px;top:589px">Output network</div>
<div class="info" style="left:1023.6px;top:589px">Best validation</div>
<div class="info" style="left:871px;top:612px">Hardware resource</div>
<div class="info" style="left:1023.6px;top:612px">Single GPU</div>
<div class="a" style="left:951px;top:231px;width:225px;height:5px;background:#1f7fd8"></div></div>
<div class="a" style="left:0;top:0;width:1201px;height:671px;border:1px solid #b9b9b9;border-radius:8px 8px 7px 7px;pointer-events:none"></div>
</body></html>
